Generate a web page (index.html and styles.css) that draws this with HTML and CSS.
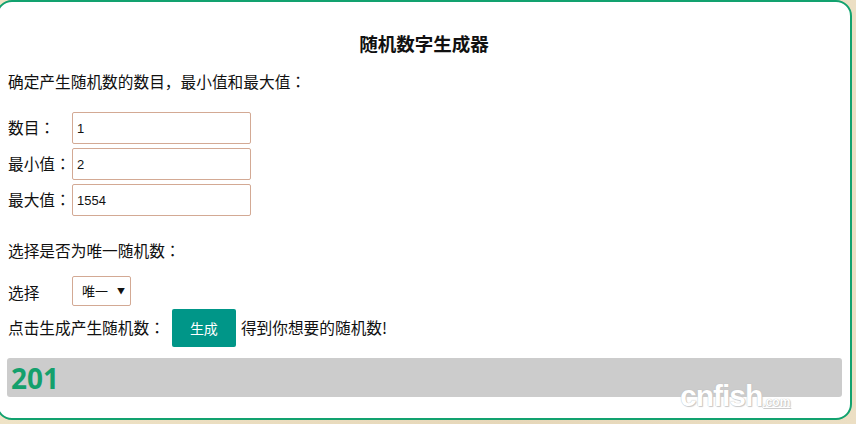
FILE: index.html
```html
<!DOCTYPE html>
<html>
<head>
    <meta charset="utf-8">
    <title>随机数字生成器</title>
    <link rel="stylesheet" href="styles.css">
</head>
<body>
    <div class="panel">
        <h3 class="title">随机数字生成器</h3>
        <p class="intro">确定产生随机数的数目，最小值和最大值：</p>

        <div class="fields">
            <label class="row"><span class="label">数目：</span><input type="text" value="1"></label>
            <label class="row"><span class="label">最小值：</span><input type="text" value="2"></label>
            <label class="row"><span class="label">最大值：</span><input type="text" value="1554"></label>
        </div>

        <p class="intro second">选择是否为唯一随机数：</p>

        <div class="row pick">
            <span class="label">选择</span>
            <span class="select">唯一 <i class="arrow">▼</i></span>
        </div>

        <div class="row go">
            <span>点击生成产生随机数：</span>
            <button class="btn">生成</button>
            <span>得到你想要的随机数!</span>
        </div>

        <div class="result">201</div>
        <span class="mark">cnfish<small>.com</small></span>
    </div>
</body>
</html>
```

FILE: styles.css
```css
body { margin: 0; background: linear-gradient(90deg, #efe3c6, #e6d7b9 60%, #ecdfc4); font-family: "Noto Sans CJK JP", "Microsoft YaHei", sans-serif; font-size: 15.7px; line-height: 20px; color: #111; height: 424px; overflow: hidden; }
.panel { position: relative; box-sizing: border-box; margin-left: -4px; width: 856px; height: 420px; background: #fff; border: 2px solid #12a26f; border-radius: 16px; padding: 28px 8px 0 10px; }
.title { margin: 0; text-align: center; font-size: 18.5px; line-height: 26px; font-weight: bold; padding-right: 2px; }
.intro { margin: 16px 0 0; line-height: 20px; }
.intro.second { margin-top: 25px; }
.fields { margin-top: 20px; display: flex; flex-direction: column; gap: 4px; }
.row { display: flex; align-items: center; }
.label { display: inline-block; width: 64px; }
input { box-sizing: border-box; width: 179px; height: 32px; margin: 0; padding: 0 4px; border: 1px solid #d3a994; border-radius: 2px; font-family: "Liberation Sans", Arial, sans-serif; font-size: 13px; color: #111; }
.pick { margin-top: 15px; height: 30px; }
.pick .label { padding-top: 3px; }
.select { box-sizing: border-box; display: inline-flex; align-items: center; justify-content: space-between; width: 59px; height: 30px; padding: 0 5px 0 9px; border: 1px solid #d3a994; border-radius: 2px; font-size: 13px; }
.arrow { font-style: normal; font-size: 8px; }
.go { margin-top: 3px; }
.btn { margin: 0 5px 0 7px; width: 64px; height: 38px; border: none; border-radius: 2px; background: #009688; color: #fff; font-family: inherit; font-size: 14px; }
.result { margin: 11px 0 0 -1px; height: 39px; background: #cccccc; border-radius: 3px; color: #14a06c; font-family: "Noto Sans", sans-serif; font-weight: bold; font-size: 28px; line-height: 40px; padding-left: 4px; }
.mark { position: absolute; left: 682px; bottom: 3px; line-height: 26px; font-family: "Liberation Sans", sans-serif; font-size: 30px; font-weight: bold; color: #fff; letter-spacing: -1px; text-shadow: 0 0 1px #aaa, 1px 1px 1px #ccc; }
.mark small { font-size: 12px; letter-spacing: 0; text-decoration: underline; }
```
